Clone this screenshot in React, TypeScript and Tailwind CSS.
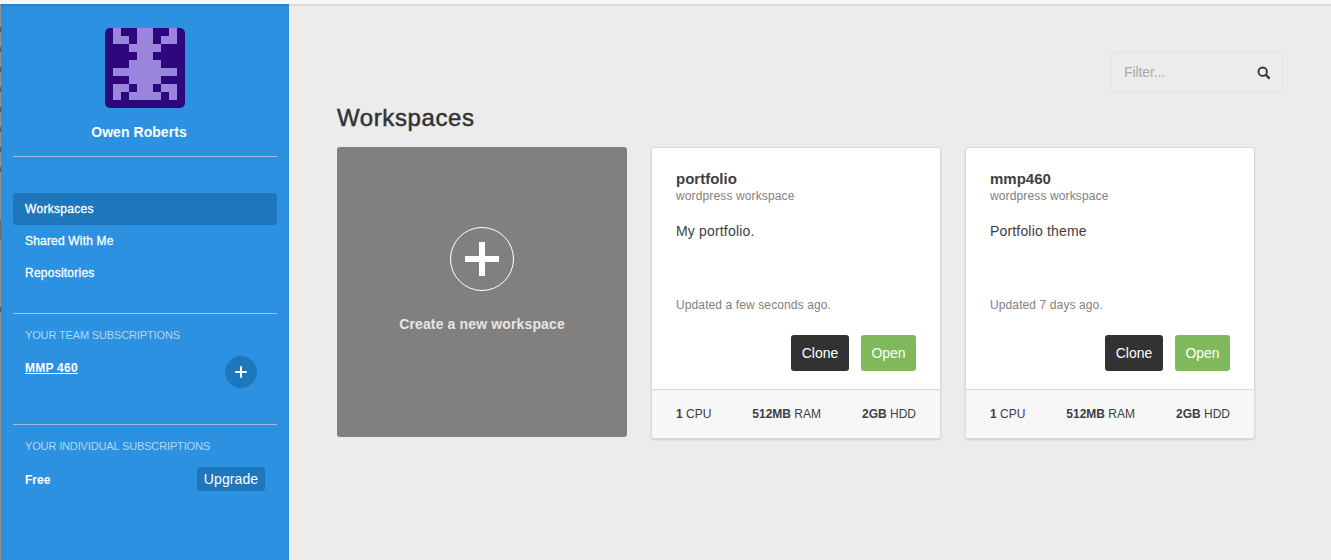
import React from "react";

const AVATAR_ROWS = [
  "0100110010",
  "0110110110",
  "0001111000",
  "0000110000",
  "0001111000",
  "0111111110",
  "0001111000",
  "0110110110",
  "0101111010",
  "0000000000",
];

function Avatar() {
  return (
    <svg width="80" height="80" viewBox="0 0 10 10" shapeRendering="crispEdges" className="rounded-[5px] bg-[#2e067e]">
      {AVATAR_ROWS.flatMap((row, y) =>
        row.split("").map((cell, x) =>
          cell === "1" ? <rect key={`${x}-${y}`} x={x} y={y} width="1" height="1" fill="#9a86dd" /> : null,
        ),
      )}
    </svg>
  );
}

function EdgeStrip() {
  return (
    <div className="flex w-px shrink-0 flex-col bg-[#949494]">
      <div className="h-[23px]" />
      {[0, 1, 2, 3, 4, 5, 6, 7].map((i) => (
        <div key={i} className="h-5 shrink-0">
          <div className="h-[5px] bg-[#5d5b59]" />
        </div>
      ))}
      <div className="mt-[33px] h-5 shrink-0 bg-[#6d6a68]" />
      <div className="mt-[67px] h-[5px] shrink-0 bg-[#5d5b59]" />
    </div>
  );
}

const NAV = [
  { label: "Workspaces", active: true, spacing: "tracking-[0.3px]" },
  { label: "Shared With Me", active: false, spacing: "tracking-[0.18px]" },
  { label: "Repositories", active: false, spacing: "tracking-[0.24px]" },
];

function Sidebar() {
  return (
    <aside className="flex w-72 shrink-0 flex-col bg-[#2c91e0] px-3 text-white shadow-[inset_0_2px_3px_-1px_rgba(0,0,0,0.2)]">
      <div className="flex h-[153px] flex-col items-center border-b border-[#a5bad9] pt-6">
        <Avatar />
        <div className="mt-[14px] mr-3 text-[14px] leading-5 font-bold tracking-[0.05px]">Owen Roberts</div>
      </div>
      <nav className="flex h-[157px] flex-col border-b border-[#9cc6ec] pt-9">
        {NAV.map((n) => (
          <a
            key={n.label}
            className={`flex h-8 items-center rounded-[3px] px-3 text-[12px] [-webkit-text-stroke:0.3px_white] ${n.spacing} ${n.active ? "bg-[#1e76bb]" : ""}`}
          >
            {n.label}
          </a>
        ))}
      </nav>
      <section className="h-[111px] border-b border-[#a5bad9] px-3 pt-[13px]">
        <h2 className="text-[11px] leading-4 tracking-[-0.14px] text-[#b2d8f5]">YOUR TEAM SUBSCRIPTIONS</h2>
        <div className="mt-[13px] flex items-start justify-between pr-2">
          <a className="pt-1 text-[12px] leading-4 font-bold tracking-[0.25px] underline">MMP 460</a>
          <button className="flex size-8 items-center justify-center rounded-full bg-[#1e76bb]">
            <svg width="12" height="12" viewBox="0 0 12 12" stroke="#fff" strokeWidth="2">
              <path d="M6 .3v11.4M.3 6h11.4" />
            </svg>
          </button>
        </div>
      </section>
      <section className="px-3 pt-[13px]">
        <h2 className="text-[11px] leading-4 tracking-[-0.14px] text-[#b2d8f5]">YOUR INDIVIDUAL SUBSCRIPTIONS</h2>
        <div className="mt-[13px] flex h-6 items-center justify-between">
          <span className="pt-px text-[12px] font-bold">Free</span>
          <button className="flex h-6 w-[68px] items-center justify-center rounded-[3px] bg-[#1e76bb] text-[14px] tracking-[0.1px]">
            Upgrade
          </button>
        </div>
      </section>
    </aside>
  );
}

const WORKSPACES = [
  { name: "portfolio", description: "My portfolio.", updated: "Updated a few seconds ago." },
  { name: "mmp460", description: "Portfolio theme", updated: "Updated 7 days ago." },
];

function WorkspaceCard({ name, description, updated }: (typeof WORKSPACES)[number]) {
  return (
    <article className="flex h-[292px] w-[290px] flex-col rounded-[3px] border border-[#d9d9d9] bg-white shadow-[0_1px_2px_rgba(0,0,0,0.12)]">
      <div className="flex h-[241px] shrink-0 flex-col px-6 pt-[22px]">
        <h3 className="text-[15px] leading-[18px] font-bold text-[#404040]">{name}</h3>
        <p className="text-[12px] leading-4 tracking-[0.13px] text-[#808080]">wordpress workspace</p>
        <p className="mt-[17px] text-[14px] leading-5 tracking-[0.17px] text-[#404040]">{description}</p>
        <p className="mt-14 text-[12px] leading-4 tracking-[0.11px] text-[#808080]">{updated}</p>
        <div className="mt-[22px] flex justify-end gap-3 text-[14px] text-white">
          <button className="h-9 w-[58px] rounded-[3px] bg-[#323232]">Clone</button>
          <button className="h-9 w-[55px] rounded-[3px] bg-[#80b95c]">Open</button>
        </div>
      </div>
      <div className="flex flex-1 items-center justify-between rounded-b-[3px] border-t border-[#d9d9d9] bg-[#f7f7f7] px-6 text-[12px] text-[#404040]">
        <span><b>1</b> CPU</span>
        <span><b>512MB</b> RAM</span>
        <span><b>2GB</b> HDD</span>
      </div>
    </article>
  );
}

export default function App() {
  return (
    <div className="flex h-[560px] w-[1331px] flex-col overflow-hidden bg-[#ececec] font-['Liberation_Sans',Arial,sans-serif]">
      <header className="h-1 shrink-0 bg-[#f6f6f6]" />
      <div className="flex min-h-0 flex-1">
        <EdgeStrip />
        <Sidebar />
        <main className="flex flex-1 flex-col border-t-2 border-[#d9d9d9] px-12 pt-[46px]">
          <div className="flex h-[41px] w-[172px] items-center justify-between self-end rounded-[3px] border border-[#e4e4e4] pr-[11.5px] pl-3">
            <span className="text-[14px] tracking-[-0.1px] text-[#aaaaaa]">Filter...</span>
            <svg width="14" height="14" viewBox="0 0 14 14" fill="none" stroke="#333">
              <circle cx="5.7" cy="5.7" r="4.2" strokeWidth="1.9" />
              <path d="M8.8 8.8 12.6 12.6" strokeWidth="2.3" />
            </svg>
          </div>
          <h1 className="mt-[11px] text-[24px] leading-7 tracking-[0.6px] text-[#333] [-webkit-text-stroke:0.5px_#333]">Workspaces</h1>
          <div className="mt-[15px] flex items-start gap-6">
            <div className="flex size-[290px] flex-col items-center rounded-[3px] bg-[#81807e] pt-20">
              <svg width="64" height="64" viewBox="0 0 64 64" fill="none" stroke="#fff">
                <circle cx="32" cy="32" r="31.5" />
                <path d="M32 15v34M15 32h34" strokeWidth="6" />
              </svg>
              <div className="mt-[23px] text-[14px] leading-5 font-bold tracking-[0.14px] text-[#e6e6e5]">Create a new workspace</div>
            </div>
            {WORKSPACES.map((w) => (
              <WorkspaceCard key={w.name} {...w} />
            ))}
          </div>
        </main>
      </div>
    </div>
  );
}
